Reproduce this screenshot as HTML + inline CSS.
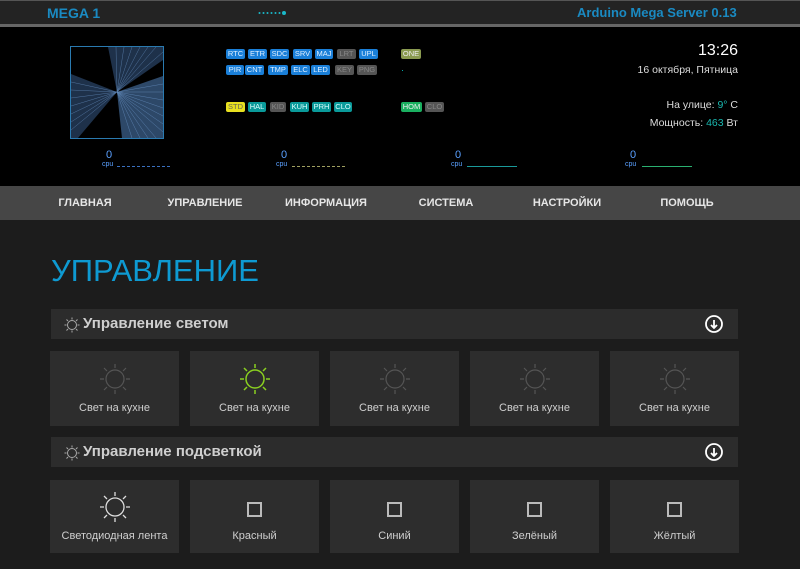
<!DOCTYPE html>
<html><head><meta charset="utf-8"><style>
*{margin:0;padding:0;box-sizing:border-box}
body{width:800px;height:569px;background:#1c1c1c;font-family:"Liberation Sans",sans-serif;position:relative;overflow:hidden}
.a{position:absolute}
.b{position:absolute;height:10px;font-size:7.5px;line-height:10px;text-align:center;color:#dfefff;background:#1a7fd8;border-radius:2px}
.g{background:#555;color:#888}
.t{background:#0a9a9a;color:#dff}
.nav{position:absolute;top:186px;left:0;width:800px;height:34px;background:#464646}
.nav span{position:absolute;top:11px;font-size:11px;font-weight:bold;color:#e6e6e6;transform:translateX(-50%)}
.bar{position:absolute;left:51px;width:687px;height:30px;background:#2c2c2c}
.bar .h{position:absolute;left:32px;top:6px;font-size:15px;font-weight:bold;color:#cfcfcf}
.card{position:absolute;width:129px;background:#2d2d2d}
.card .l{position:absolute;left:0;width:100%;text-align:center;font-size:11px;color:#cfcfcf}
.cpu0{position:absolute;font-size:11px;color:#5aa0ff}
.cpul{position:absolute;font-size:7px;color:#5aa0ff}
</style></head><body>
<div class="a" style="left:0;top:0;width:800px;height:24px;background:#232323;border-top:1px solid #555"></div>
<div class="a" style="left:0;top:24px;width:800px;height:3px;background:#666"></div>
<div class="a" style="left:0;top:27px;width:800px;height:159px;background:#000"></div>
<div class="a" style="left:47px;top:5px;font-size:14px;font-weight:bold;color:#1a8ac2">MEGA 1</div>
<div class="a" style="left:577px;top:5px;font-size:13px;font-weight:bold;color:#1a8ac2">Arduino Mega Server 0.13</div>
<svg class="a" style="left:258px;top:10px" width="30" height="6"><g fill="#1ab8c8"><circle cx="1.5" cy="3" r="1"/><circle cx="5.5" cy="3" r="1"/><circle cx="9.5" cy="3" r="1"/><circle cx="13.5" cy="3" r="1"/><circle cx="17.5" cy="3" r="1"/><circle cx="21.5" cy="3" r="1"/><circle cx="26" cy="3" r="2"/></g></svg>

<svg class="a" style="left:70px;top:46px" width="94" height="93" viewBox="0 0 94 93">
<rect x="0.5" y="0.5" width="93" height="92" fill="#000" stroke="#2a7ab0"/>
<path d="M47 46 L38 1 L93 1 L93 14 Z" fill="#4a7ab8" opacity="0.4"/>
<path d="M47 46 L1 28 L1 92 L8 92 Z" fill="#4a7ab8" opacity="0.4"/>
<path d="M47 46 L93 30 L93 92 L52 92 Z" fill="#5a90d0" opacity="0.5"/>
<g stroke="#7aa8e0" stroke-width="0.4" opacity="0.7">
<path d="M47 46 L46 1 M47 46 L54 1 M47 46 L62 1 M47 46 L70 1 M47 46 L78 1 M47 46 L86 1 M47 46 L93 6"/>
<path d="M47 46 L1 36 M47 46 L1 44 M47 46 L1 52 M47 46 L1 60 M47 46 L1 68 M47 46 L1 76 M47 46 L1 84"/>
<path d="M47 46 L93 38 M47 46 L93 46 M47 46 L93 54 M47 46 L93 62 M47 46 L93 70 M47 46 L93 78 M47 46 L93 86 M47 46 L86 92 M47 46 L78 92 M47 46 L70 92 M47 46 L62 92"/>
</g>
</svg>

<div class="b" style="left:226px;top:49px;width:19px">RTC</div>
<div class="b" style="left:248px;top:49px;width:19px">ETR</div>
<div class="b" style="left:270px;top:49px;width:19px">SDC</div>
<div class="b" style="left:293px;top:49px;width:19px">SRV</div>
<div class="b" style="left:315px;top:49px;width:18px">MAJ</div>
<div class="b g" style="left:337px;top:49px;width:19px">LRT</div>
<div class="b" style="left:359px;top:49px;width:19px">UPL</div>
<div class="b" style="left:226px;top:65px;width:18px">PIR</div>
<div class="b" style="left:245px;top:65px;width:19px">CNT</div>
<div class="b" style="left:268px;top:65px;width:20px">TMP</div>
<div class="b" style="left:291px;top:65px;width:19px">ELC</div>
<div class="b" style="left:311px;top:65px;width:19px">LED</div>
<div class="b g" style="left:335px;top:65px;width:19px">KEY</div>
<div class="b g" style="left:357px;top:65px;width:20px">PNG</div>
<div class="b" style="left:226px;top:102px;width:19px;background:#e8e020;color:#665">STD</div>
<div class="b t" style="left:248px;top:102px;width:18px">HAL</div>
<div class="b g" style="left:270px;top:102px;width:16px">KID</div>
<div class="b t" style="left:290px;top:102px;width:19px">KUH</div>
<div class="b t" style="left:312px;top:102px;width:19px">PRH</div>
<div class="b t" style="left:334px;top:102px;width:18px">CLO</div>
<div class="b" style="left:401px;top:49px;width:20px;background:#8a9a50;color:#eee">ONE</div>
<div class="a" style="left:402px;top:70px;width:1px;height:1px;background:#0aa"></div>
<div class="b" style="left:401px;top:102px;width:21px;background:#1ab060;color:#eee">HOM</div>
<div class="b g" style="left:425px;top:102px;width:19px">CLO</div>

<div class="a" style="right:62px;top:42px;font-size:16px;color:#fff">13:26</div>
<div class="a" style="right:62px;top:64px;font-size:10.5px;color:#ddd">16 октября, Пятница</div>
<div class="a" style="right:62px;top:99px;font-size:10.5px;color:#ddd">На улице: <span style="color:#1ab8b0">9°</span> C</div>
<div class="a" style="right:62px;top:117px;font-size:10.5px;color:#ddd">Мощность: <span style="color:#1ab8b0">463</span> Вт</div>

<div class="cpu0" style="left:106px;top:149px">0</div><div class="cpul" style="left:102px;top:161px">cpu</div><div class="a" style="left:117px;top:166px;width:53px;border-top:1px dashed #3a70c0"></div>
<div class="cpu0" style="left:281px;top:149px">0</div><div class="cpul" style="left:276px;top:161px">cpu</div><div class="a" style="left:292px;top:166px;width:53px;border-top:1px dashed #a0a060"></div>
<div class="cpu0" style="left:455px;top:149px">0</div><div class="cpul" style="left:451px;top:161px">cpu</div><div class="a" style="left:467px;top:166px;width:50px;border-top:1px solid #1a9a9a"></div>
<div class="cpu0" style="left:630px;top:149px">0</div><div class="cpul" style="left:625px;top:161px">cpu</div><div class="a" style="left:642px;top:166px;width:50px;border-top:1px solid #2ab070"></div>

<div class="nav">
<span style="left:85px">ГЛАВНАЯ</span><span style="left:205px">УПРАВЛЕНИЕ</span><span style="left:326px">ИНФОРМАЦИЯ</span><span style="left:446px">СИСТЕМА</span><span style="left:567px">НАСТРОЙКИ</span><span style="left:687px">ПОМОЩЬ</span>
</div>

<div class="a" style="left:51px;top:253px;font-size:31px;color:#0e9ad2">УПРАВЛЕНИЕ</div>

<svg width="0" height="0" style="position:absolute"><defs>
<g id="sun"><circle cx="0" cy="0" r="9" fill="none"/><path d="M0 -11V-15M0 11V15M-11 0H-15M11 0H15M-8 -8L-11 -11M8 -8L11 -11M-8 8L-11 11M8 8L11 11"/></g>
<g id="dl"><circle cx="0" cy="0" r="8" fill="none" stroke="#fff" stroke-width="1.8"/><path d="M0 -4V4M-3 1L0 4L3 1" fill="none" stroke="#fff" stroke-width="1.8"/></g>
</defs></svg>

<div class="bar" style="top:309px"><svg class="a" style="left:13px;top:8px" width="16" height="16" viewBox="-8 -8 16 16"><use href="#sun" transform="scale(0.5)" stroke="#aaa" stroke-width="2"/></svg><div class="h">Управление светом</div><svg class="a" style="left:653px;top:5px" width="20" height="20" viewBox="-10 -10 20 20"><use href="#dl"/></svg></div>
<div class="bar" style="top:437px"><svg class="a" style="left:13px;top:8px" width="16" height="16" viewBox="-8 -8 16 16"><use href="#sun" transform="scale(0.5)" stroke="#aaa" stroke-width="2"/></svg><div class="h">Управление подсветкой</div><svg class="a" style="left:653px;top:5px" width="20" height="20" viewBox="-10 -10 20 20"><use href="#dl"/></svg></div>

<div class="card" style="left:50px;top:351px;height:75px"><svg class="a" style="left:49px;top:12px" width="32" height="32" viewBox="-16 -16 32 32"><use href="#sun" stroke="#555" stroke-width="1.2"/></svg><div class="l" style="top:51px">Свет на кухне</div></div>
<div class="card" style="left:190px;top:351px;height:75px"><svg class="a" style="left:49px;top:12px" width="32" height="32" viewBox="-16 -16 32 32"><use href="#sun" stroke="#8ad020" stroke-width="1.5"/></svg><div class="l" style="top:51px">Свет на кухне</div></div>
<div class="card" style="left:330px;top:351px;height:75px"><svg class="a" style="left:49px;top:12px" width="32" height="32" viewBox="-16 -16 32 32"><use href="#sun" stroke="#555" stroke-width="1.2"/></svg><div class="l" style="top:51px">Свет на кухне</div></div>
<div class="card" style="left:470px;top:351px;height:75px"><svg class="a" style="left:49px;top:12px" width="32" height="32" viewBox="-16 -16 32 32"><use href="#sun" stroke="#555" stroke-width="1.2"/></svg><div class="l" style="top:51px">Свет на кухне</div></div>
<div class="card" style="left:610px;top:351px;height:75px"><svg class="a" style="left:49px;top:12px" width="32" height="32" viewBox="-16 -16 32 32"><use href="#sun" stroke="#555" stroke-width="1.2"/></svg><div class="l" style="top:51px">Свет на кухне</div></div>

<div class="card" style="left:50px;top:480px;height:73px"><svg class="a" style="left:49px;top:11px" width="32" height="32" viewBox="-16 -16 32 32"><use href="#sun" stroke="#ddd" stroke-width="1.3"/></svg><div class="l" style="top:50px">Светодиодная лента</div></div>
<div class="card" style="left:190px;top:480px;height:73px"><div class="a" style="left:57px;top:22px;width:15px;height:15px;border:2px solid #bbb"></div><div class="l" style="top:50px">Красный</div></div>
<div class="card" style="left:330px;top:480px;height:73px"><div class="a" style="left:57px;top:22px;width:15px;height:15px;border:2px solid #bbb"></div><div class="l" style="top:50px">Синий</div></div>
<div class="card" style="left:470px;top:480px;height:73px"><div class="a" style="left:57px;top:22px;width:15px;height:15px;border:2px solid #bbb"></div><div class="l" style="top:50px">Зелёный</div></div>
<div class="card" style="left:610px;top:480px;height:73px"><div class="a" style="left:57px;top:22px;width:15px;height:15px;border:2px solid #bbb"></div><div class="l" style="top:50px">Жёлтый</div></div>
</body></html>
